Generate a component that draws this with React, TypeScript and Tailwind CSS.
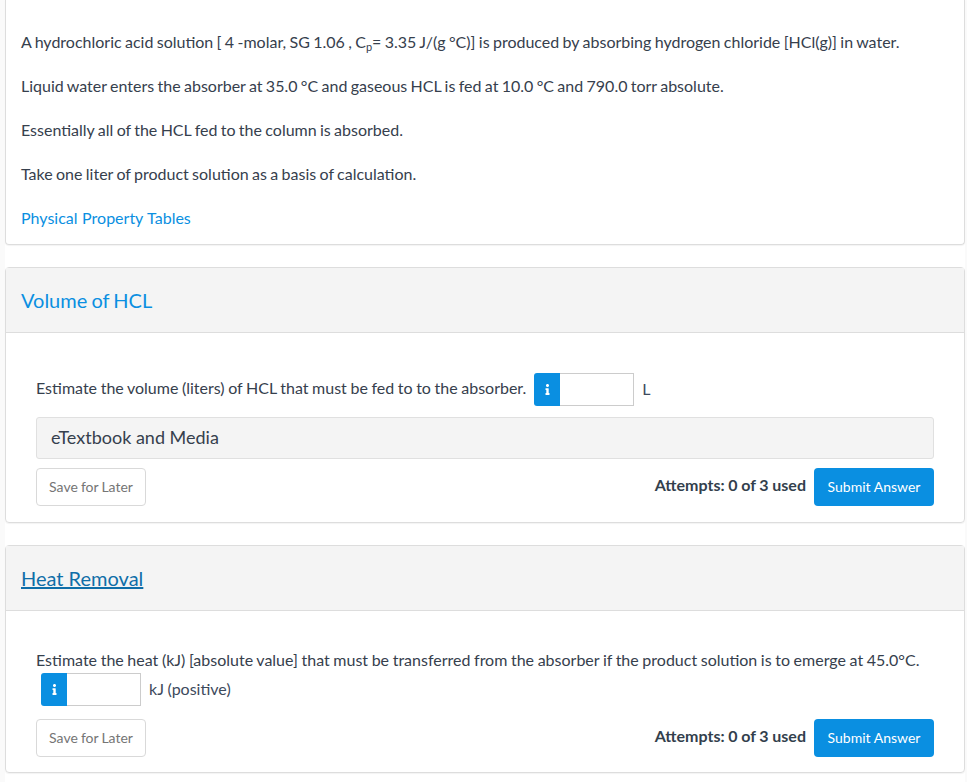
import React from 'react';
import { FaInfo } from 'react-icons/fa';

const AnswerInput = ({ unit }: { unit: string }) => (
  <div className="flex items-center">
    <div className="w-[26px] h-[33px] bg-[#0a8fe1] rounded-l-[3px] flex items-center justify-center text-white">
      <FaInfo className="w-[11px] h-[11px]" />
    </div>
    <div className="w-[74px] h-[33px] bg-white border border-[#cccccc] border-l-0" />
    <span className="ml-2 pb-[2px] text-[16px] [word-spacing:-0.5px] text-[#3d4a5c]">{unit}</span>
  </div>
);

const Footer = () => (
  <div className="flex justify-between items-start">
    <button className="w-[110px] h-[38px] pb-[2px] border border-[#d9d9d9] rounded-[4px] bg-white text-[14px] [word-spacing:-0.5px] text-[#757575]">
      Save for Later
    </button>
    <div className="flex items-start">
      <span className="mt-[5px] mr-2 text-[16px] font-bold [word-spacing:-0.2px] text-[#333f4d]">Attempts: 0 of 3 used</span>
      <button className="w-[120px] h-[38px] pb-[2px] rounded-[4px] bg-[#0a8fe1] text-[14px] text-white">
        Submit Answer
      </button>
    </div>
  </div>
);

export default function App() {
  return (
    <div className="min-h-[782px] bg-[#fafafa] pl-[5px] pr-[2px] font-['Lato','Open_Sans',sans-serif] text-[16px] text-[#36404d]">
      <div className="min-h-[782px] bg-white pb-[9px]">
        <div className="border border-t-0 border-[#dddddd] rounded-b-[4px] shadow-[0_1px_1px_rgba(0,0,0,0.05)] px-[15px] pt-[30px] h-[245px]">
          <div className="flex flex-col gap-5 leading-6 [word-spacing:-0.75px]">
            <p>
              A hydrochloric acid solution [ 4 -molar, SG 1.06 , C<sub className="text-[11px]">p</sub>= 3.35 J/(g °C)] is produced by absorbing hydrogen chloride [HCl(g)] in water.
            </p>
            <p>Liquid water enters the absorber at 35.0 °C and gaseous HCL is fed at 10.0 °C and 790.0 torr absolute.</p>
            <p>Essentially all of the HCL fed to the column is absorbed.</p>
            <p>Take one liter of product solution as a basis of calculation.</p>
            <p className="text-[#0a8fe1] [word-spacing:0.5px]">Physical Property Tables</p>
          </div>
        </div>

        <div className="mt-[22px] h-[256px] border border-[#dddddd] rounded-[4px] shadow-[0_1px_1px_rgba(0,0,0,0.05)]">
          <div className="h-[65px] bg-[#f4f4f4] border-b border-[#dddddd] px-[15px] flex items-center text-[20px] [word-spacing:-1px] text-[#0a8fe1]">
            Volume of HCL
          </div>
          <div className="px-[30px] pt-[40px]">
            <div className="flex items-start gap-2">
              <span className="leading-[30px] [word-spacing:-0.5px]">Estimate the volume (liters) of HCL that must be fed to to the absorber.</span>
              <AnswerInput unit="L" />
            </div>
            <div className="mt-[11px] h-[42px] bg-[#f4f4f4] border border-[#e0e0e0] rounded-[3px] px-[14px] pb-[2px] flex items-center text-[18px]">
              eTextbook and Media
            </div>
            <div className="mt-[9px]">
              <Footer />
            </div>
          </div>
        </div>

        <div className="mt-[22px] h-[228px] border border-[#dddddd] rounded-[4px] shadow-[0_1px_1px_rgba(0,0,0,0.05)]">
          <div className="h-[65px] bg-[#f4f4f4] border-b border-[#dddddd] px-[15px] flex items-center text-[20px] text-[#0f6ea8] underline">
            Heat Removal
          </div>
          <div className="px-[30px] pt-[37px]">
            <p className="leading-6 [word-spacing:-0.5px]">
              Estimate the heat (kJ) [absolute value] that must be transferred from the absorber if the product solution is to emerge at 45.0°C.
            </p>
            <div className="ml-[5px] mt-[1px]">
              <AnswerInput unit="kJ (positive)" />
            </div>
            <div className="mt-[13px]">
              <Footer />
            </div>
          </div>
        </div>
      </div>
    </div>
  );
}
